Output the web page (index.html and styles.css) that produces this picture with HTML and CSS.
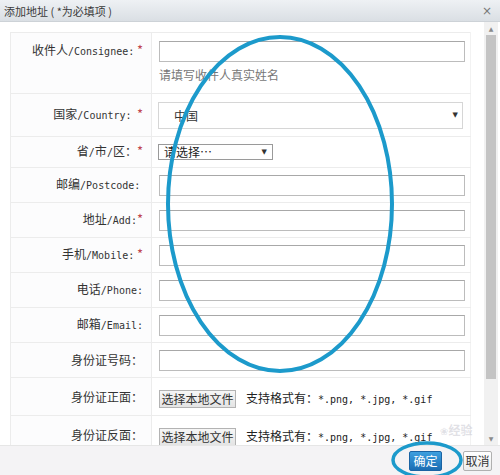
FILE: index.html
```html
<!DOCTYPE html>
<html lang="zh">
<head>
<meta charset="utf-8">
<title>添加地址</title>
<link rel="stylesheet" href="styles.css">
</head>
<body>
<div class="dialog">
  <div class="titlebar">
    <span class="title">添加地址 ( *为必填项 )</span>
    <span class="close">×</span>
  </div>
  <div class="main">
    <div class="content">
      <table class="form">
        <tr class="r-consignee">
          <td class="lbl top">收件人<span class="en">/Consignee:</span> <span class="req">*</span></td>
          <td class="val top">
            <div class="input"></div>
            <div class="hint">请填写收件人真实姓名</div>
          </td>
        </tr>
        <tr class="r-country">
          <td class="lbl">国家<span class="en">/Country:</span>&nbsp;&nbsp;<span class="req">*</span></td>
          <td class="val"><div class="select-big"><span>中国</span><span class="arrow">▼</span></div></td>
        </tr>
        <tr class="r-prov">
          <td class="lbl">省<span class="en">/</span>市<span class="en">/</span>区：<span class="req">*</span></td>
          <td class="val"><div class="select-small"><span>请选择…</span><span class="arrow">▼</span></div></td>
        </tr>
        <tr class="r-std">
          <td class="lbl">邮编<span class="en">/Postcode:</span>&nbsp;</td>
          <td class="val"><div class="input"></div></td>
        </tr>
        <tr class="r-std">
          <td class="lbl">地址<span class="en">/Add:</span><span class="req">*</span></td>
          <td class="val"><div class="input"></div></td>
        </tr>
        <tr class="r-std">
          <td class="lbl">手机<span class="en">/Mobile:</span> <span class="req">*</span></td>
          <td class="val"><div class="input"></div></td>
        </tr>
        <tr class="r-std">
          <td class="lbl">电话<span class="en">/Phone:</span></td>
          <td class="val"><div class="input"></div></td>
        </tr>
        <tr class="r-std">
          <td class="lbl">邮箱<span class="en">/Email:</span></td>
          <td class="val"><div class="input"></div></td>
        </tr>
        <tr class="r-std">
          <td class="lbl">身份证号码：</td>
          <td class="val"><div class="input"></div></td>
        </tr>
        <tr class="r-file">
          <td class="lbl">身份证正面：</td>
          <td class="val"><span class="filebtn">选择本地文件</span><span class="fmt">支持格式有：<span class="en">*.png, *.jpg, *.gif</span></span></td>
        </tr>
        <tr class="r-file">
          <td class="lbl">身份证反面：</td>
          <td class="val"><span class="filebtn">选择本地文件</span><span class="fmt">支持格式有：<span class="en">*.png, *.jpg, *.gif</span></span></td>
        </tr>
      </table>
    </div>
    <div class="scrollbar">
      <div class="sb-up">▲</div>
      <div class="sb-thumb"></div>
      <div class="sb-space"></div>
      <div class="sb-down">▼</div>
    </div>
  </div>
  <div class="footer">
    <span class="btn ok">确定</span>
    <span class="btn cancel">取消</span>
  </div>
</div>
<div class="watermark">
  <span class="wm-logo"><span class="wm-paw">❀</span>经验</span>
</div>
<svg class="annot" width="500" height="475" viewBox="0 0 500 475">
  <ellipse cx="280" cy="204" rx="112" ry="167" fill="none" stroke="#1c9acb" stroke-width="4"/>
  <ellipse cx="427" cy="460" rx="34" ry="17" fill="none" stroke="#1c9acb" stroke-width="3.5"/>
</svg>
</body>
</html>
```

FILE: styles.css
```css
html, body {
  margin: 0;
  padding: 0;
}
body {
  width: 500px;
  height: 475px;
  overflow: hidden;
  background: #ffffff;
  font-family: "Noto Sans CJK SC", "Liberation Sans", sans-serif;
  color: #333;
  position: relative;
}
.dialog {
  display: flex;
  flex-direction: column;
  height: 475px;
}
.titlebar {
  height: 22px;
  flex: none;
  box-sizing: border-box;
  border-bottom: 1px solid #cdd2d7;
  background: linear-gradient(#eef1f4, #dadfe4);
  display: flex;
  align-items: center;
  justify-content: space-between;
  padding: 0 8px 0 4px;
}
.title {
  font-size: 11px;
  line-height: 14px;
  color: #3a3a3a;
}
.close {
  font-family: "DejaVu Sans", sans-serif;
  font-size: 12px;
  color: #777;
  line-height: 12px;
}
.main {
  flex: 1;
  display: flex;
  overflow: hidden;
  min-height: 0;
}
.content {
  flex: 1;
  padding: 10px 12px 0 10px;
  overflow: hidden;
}
.form {
  width: 461px;
  border-collapse: collapse;
  border-top: 1px solid #ececec;
  border-left: 1px solid #ececec;
  border-right: 1px solid #f2f2f2;
}
.form td {
  border-bottom: 1px solid #ececec;
  padding: 0;
}
.lbl {
  width: 132px;
  padding-right: 8px !important;
  text-align: right;
  vertical-align: middle;
  font-size: 12px;
  line-height: 16px;
  color: #333;
  background: #fcfcfd;
  border-right: 1px solid #ececec;
  white-space: nowrap;
}
.val {
  padding-left: 7px !important;
  vertical-align: middle;
  background: #fff;
}
.top {
  vertical-align: top;
}
.lbl.top {
  padding-top: 9px !important;
}
.val.top {
  padding-top: 8px !important;
}
.en {
  font-family: "DejaVu Sans Mono", monospace;
  font-size: 10px;
}
.req {
  color: #c0454e;
  font-size: 13px;
}
.r-consignee { height: 61px; }
.r-country { height: 43px; }
.r-prov { height: 31px; }
.r-std { height: 35px; }
.r-file { height: 38px; }

.input {
  width: 306px;
  height: 21px;
  box-sizing: border-box;
  border: 1px solid #bcbcbc;
  border-top-color: #a8a8a8;
  background: #fff;
}
.hint {
  margin-top: 5px;
  font-size: 12px;
  line-height: 16px;
  color: #777;
}
.select-big {
  width: 305px;
  height: 27px;
  box-sizing: border-box;
  border: 1px solid #d6d6d6;
  display: flex;
  align-items: center;
  justify-content: space-between;
  padding: 0 4px 0 15px;
  font-size: 12px;
  color: #333;
  margin-left: -1px;
}
.select-small {
  width: 115px;
  height: 16px;
  box-sizing: border-box;
  border: 1px solid #9a9a9a;
  display: flex;
  align-items: center;
  justify-content: space-between;
  padding: 0 5px 0 5px;
  font-size: 12px;
  line-height: 14px;
  color: #222;
  margin-left: -1px;
}
.arrow {
  font-family: "DejaVu Sans", sans-serif;
  font-size: 7px;
  color: #333;
}
.filebtn {
  display: inline-block;
  width: 77px;
  height: 18px;
  box-sizing: border-box;
  border: 1px solid #b3b3b3;
  background: linear-gradient(#f6f6f6, #e4e4e4);
  font-size: 12px;
  line-height: 16px;
  text-align: center;
  color: #333;
  vertical-align: middle;
}
.fmt {
  margin-left: 10px;
  font-size: 12px;
  line-height: 16px;
  vertical-align: middle;
  color: #222;
}
.scrollbar {
  width: 14px;
  flex: none;
  margin-right: 2px;
  background: #f1f1f1;
  display: flex;
  flex-direction: column;
  align-items: center;
}
.sb-up, .sb-down {
  height: 13px;
  font-family: "DejaVu Sans", sans-serif;
  font-size: 6px;
  line-height: 13px;
  color: #8a8a8a;
}
.sb-thumb {
  width: 10px;
  height: 344px;
  background: #c4c4c4;
}
.sb-space {
  flex: 1;
}
.footer {
  height: 30px;
  flex: none;
  background: #f4f3f5;
  border-top: 1px solid #e6e6e6;
  box-sizing: border-box;
  display: flex;
  align-items: center;
  justify-content: flex-end;
  gap: 21px;
  padding-right: 8px;
}
.btn {
  font-size: 12px;
  line-height: 18px;
  height: 20px;
  box-sizing: border-box;
  border-radius: 2px;
  text-align: center;
}
.ok {
  width: 33px;
  color: #fff;
  background: linear-gradient(#3d9fdf, #1b6db3);
  border: 1px solid #1a63a3;
}
.cancel {
  width: 29px;
  color: #333;
  background: linear-gradient(#ffffff, #ececec);
  border: 1px solid #b0b0b0;
}
.watermark {
  position: absolute;
  left: 440px;
  top: 416px;
  pointer-events: none;
}
.wm-logo {
  font-family: "Noto Sans CJK SC", sans-serif;
  font-size: 12px;
  font-weight: bold;
  line-height: 14px;
  color: rgba(195, 195, 205, 0.5);
}
.wm-paw {
  font-family: "DejaVu Sans", sans-serif;
  font-size: 10px;
}
.annot {
  position: absolute;
  left: 0;
  top: 0;
  pointer-events: none;
}
```
